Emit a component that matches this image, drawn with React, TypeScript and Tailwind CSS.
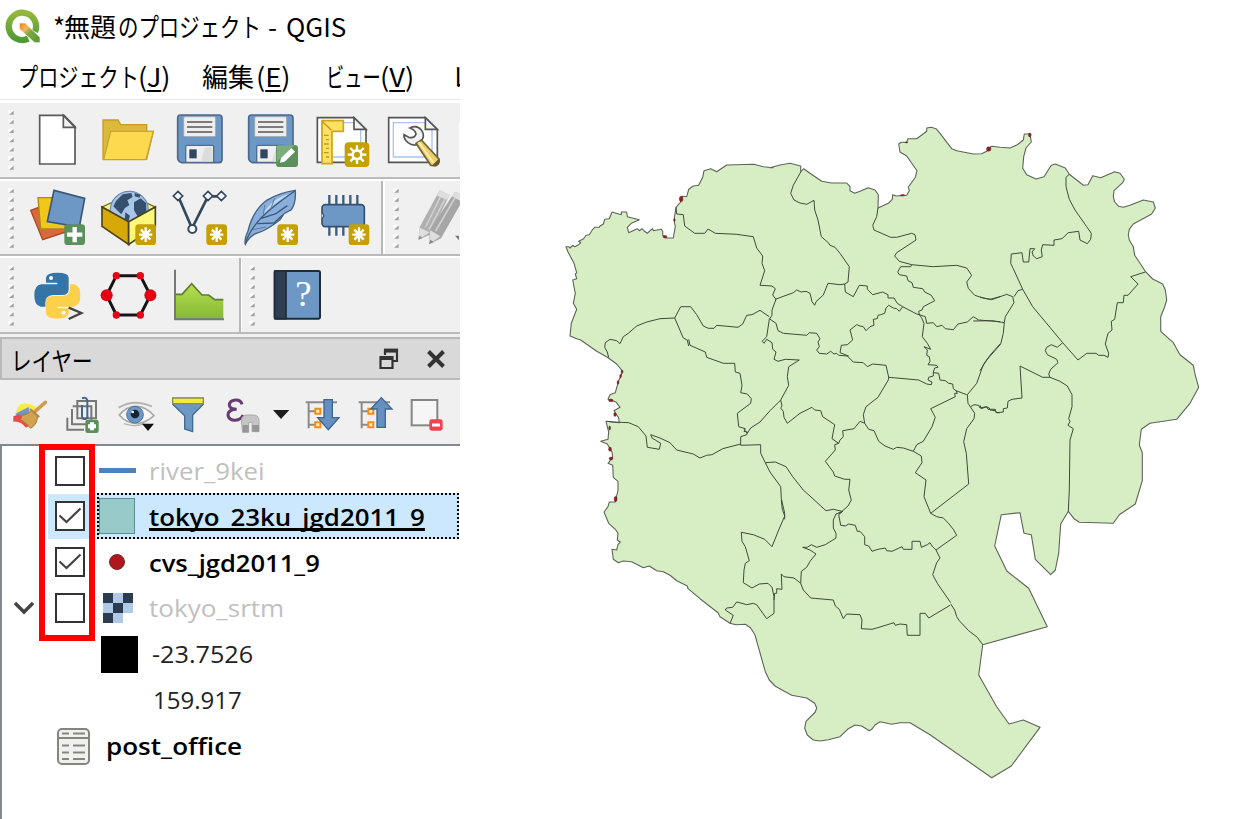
import React from "react";

type Sheet = [number, number, string];

/* Map sheets are digitised at three units per pixel from a local origin. */
const project = ([ox, oy, pts]: Sheet) =>
  pts
    .trim()
    .split(/\s+/)
    .map((p) => {
      const [x, y] = p.split(",").map(Number);
      return `${(ox + x / 3).toFixed(1)},${(oy + y / 3).toFixed(1)}`;
    })
    .join(" ");

const outline: Sheet[] = [
  [560, 120, "18,380 26,380 30,384 38,376 44,380 56,374 62,368 56,364 68,358 74,352 78,346 88,344 98,328 104,322 118,322 120,318 130,312 134,298 148,296 156,276 184,284 184,276 200,276 202,290 238,299 214,310 202,322 206,338 232,326 238,332 246,326 252,332 262,340 272,330 278,326 280,332 304,328 308,334 308,346 318,354 340,354 346,320 342,300 348,262 362,246 360,234 366,229 380,230 386,208 400,198 416,196 428,172 432,152 452,146 470,155 500,135 582,133 610,140 640,143"],
  [760, 120, "30,143 60,135 90,130 122,138 122,156 131,146 150,160 185,184 215,189 260,189 270,200 270,212 284,220 300,214 325,203 345,210 355,224 354,264 385,250 397,238 398,224 408,228 440,226 448,212 445,202 466,172 471,152 440,108 420,96 416,72 424,67 440,67 444,56 470,56 500,34 500,24 514,22 528,26 540,40 575,86 590,92 640,102 665,101 680,94 690,82"],
  [980, 120, "35,79 60,82 90,84 112,74 130,60 133,42 150,42 154,66 138,84 131,110 128,145 140,164 168,177 192,170 214,136 226,132 256,144 268,163 290,180 310,196 324,194 338,167 362,173 404,155 420,160 433,178 428,188 402,212 400,230 404,246 416,259 430,262 450,256 490,240 520,246 526,264 515,282 460,312 448,328 445,345 448,360 460,380 464,406 496,454 518,477 548,492 556,510 560,540 554,560 542,590 542,634 580,668 600,704 640,736"],
  [980, 340, "646,106 656,142 630,190 590,238 510,250 484,268 478,315 487,338 487,422 466,492 418,524 400,550 298,547 282,536 265,514 242,552 236,640 226,690 212,704 166,658 154,584 132,580 120,518 64,524 44,618 80,692"],
  [900, 530, "320,123 386,175 442,290 248,344 236,435 290,530 327,582 370,570 420,592 334,708 275,743 90,614 30,578"],
  [700, 500, "600,668 575,673 540,665 525,675 515,688 508,692 485,678 465,675 445,686 420,710 385,719 360,723 340,720 322,705 314,685 318,664 346,636 350,624 344,610 320,594 275,586 250,572 225,558 208,540 196,515 172,430 165,405 152,384 136,373 108,374 90,370 60,350 54,338 0,296"],
  [560, 340, "384,746 382,738 350,722 330,706 310,695 290,692 268,678 250,683 215,665 190,663 175,668 160,658 156,628 170,630 174,614 181,606 172,600 174,580 166,568 146,550 132,516 144,500 148,486 166,486 174,450 174,424 160,412 158,376 144,370 158,352 156,336 142,312 122,304 144,298 146,276 138,244 178,248 176,234 162,212 180,202 168,186 144,178 150,164 166,158 176,122 188,94 170,72 142,52 110,34 62,0"],
  [560, 120, "50,656 30,648 34,610 50,568 40,550 46,520 38,480 50,476 46,462 50,458 42,430 24,396"],
];

const borders: Sheet[] = [
  [560, 120, "348,262 350,282 370,284 374,318 404,340 434,340 444,327 466,340 530,343 580,350 590,384 608,408 606,430 614,452 600,496 636,498 646,506 638,525 648,538 636,570 636,586 628,598 620,650 606,664"],
  [560, 120, "146,713 142,696 134,682 136,668 150,658 170,662 180,671 190,650 205,640 230,618 260,606 300,596 344,594 362,560 392,560 410,584 430,618 445,625 462,625 470,616 534,622 548,612 560,586 576,584 600,571 628,590"],
  [560, 120, "344,594 370,654 382,660 386,678"],
  [760, 120, "122,156 100,196 92,220 102,240 120,249 140,253 162,241 164,270 174,300 184,350 205,368 210,376 225,382 240,400 268,440 264,486 254,492 240,494 204,490 190,525 168,545 164,556 156,545 150,520 138,514 124,516 110,510 100,518 46,538"],
  [760, 120, "254,492 256,516 280,530 298,496 322,498 322,508 338,524 368,516 384,524 384,534 402,534 412,550 428,560 470,582 478,584"],
  [760, 120, "354,264 350,290 338,316 342,330 392,352 410,352 455,340 465,344 468,360 410,398 404,408 418,424 455,434 520,440 590,436 620,444 635,466 620,486 625,505 644,526 670,534 690,538 720,530"],
  [760, 120, "455,434 452,440 422,440 413,456 418,464 440,468 444,482 456,488 460,502 488,506 494,516 514,526 524,542 490,560 486,570 476,574 478,584 496,590 500,610 520,608 530,620 546,616 556,626 580,629 594,612 622,606 640,590 656,600 720,605"],
  [760, 120, "428,560 418,574 410,566 400,564 386,556 378,564 374,580 362,584 354,586 352,596 340,598 342,616 330,620 318,632 310,620 300,618 290,614 270,630 278,660 262,674 244,676 240,698 266,708"],
  [760, 280, "28,116 48,130 54,152 70,160 140,166 148,158 170,160 180,176 174,186 178,200 170,210 178,220 200,222 212,214 222,222 230,220 236,226 262,228 280,246 310,248 322,260 338,252 378,256 386,292"],
  [760, 280, "386,292 385,300 354,352 318,380 310,404 314,430 326,448 342,452 356,484 375,498 400,508 410,502 430,504 460,514 484,528 486,548 466,578 498,600 492,650 512,700"],
  [760, 280, "386,292 476,300 500,312 514,314 516,306 504,300 506,292 520,288 520,276 524,264 534,262 530,256 504,254 510,244 508,230 500,226 502,210 492,200 512,208 502,190 487,170 492,130 484,112 476,102"],
  [760, 280, "520,278 536,280 540,300 556,302 566,310 578,312 580,326 588,332 620,344"],
  [760, 280, "588,332 592,340 584,340 586,350 512,386 526,412 516,440 490,484 470,494 460,514"],
  [760, 280, "720,192 690,226 670,254 650,310 622,344 624,370 644,400 642,416 620,446 611,485 619,520 626,612 512,700"],
  [760, 280, "632,380 642,374 656,376 660,384 678,380 688,384 690,390 706,392 710,398 720,398"],
  [760, 280, "6,184 12,190 20,178 36,188 38,208 48,216 42,238 54,244 76,238 118,240 86,260 82,290 86,316 62,360 30,392 0,426"],
  [760, 280, "62,360 66,378 62,384 70,394 72,412 82,430 120,400 156,382 164,390 182,392 188,410 224,434 216,476 236,490 240,480 250,470 248,452 282,446 300,424 314,430"],
  [760, 280, "236,490 224,494 226,510 196,544 220,576 224,588 254,598 270,598 266,630 274,660 264,678 246,694 236,702"],
  [760, 280, "2,494 2,520 16,548 30,576 62,620 64,656 74,700 74,718"],
  [760, 280, "16,548 46,546 78,560 98,590 130,630 198,692 220,688 246,694"],
  [560, 340, "142,244 160,246 206,248 235,260 258,288 262,322 298,328 302,310 276,294 272,284 300,294 330,308 350,330 400,342 420,354 440,346 456,344 488,326 542,312 542,290 560,284 562,276 552,274 556,266 536,260 532,220 540,214 572,190 574,176 562,162 542,158 546,136 540,100 526,96 524,70 490,70 440,52 436,36 390,16 386,-2"],
  [560, 340, "552,268 562,280 572,264 600,246"],
  [560, 340, "542,312 542,316 602,314"],
  [700, 500, "244,0 247,28 254,48 236,90 216,140 194,118 160,104 124,97 126,124 136,140 148,182 136,190 132,210 130,248 156,264 178,252 204,250 216,262 222,290 222,340 200,356 170,314 160,310 140,314 126,310 110,306 98,322 80,324 76,330 100,346 90,370"],
  [700, 500, "222,300 224,280 230,280 230,266 246,268 244,222 252,230 282,234 302,250 304,214 320,202 330,184 348,162 330,150 308,142 322,142 334,134 350,142 376,134 408,114 408,100 400,84 400,60 408,42 428,34"],
  [700, 500, "302,250 310,270 332,294 400,300 406,318 418,328 430,356 440,342 480,344 486,360 484,386 516,388 530,384 582,368 586,376 600,372 620,374 622,406 660,406 660,340 676,340 686,354 750,316"],
  [700, 500, "428,34 416,44 422,76 436,78 446,72 466,76 472,94 480,94 494,110 494,134 506,138 516,154 534,148 556,144 560,152 576,154 606,140 610,148 636,148 636,124 660,124 664,142 682,134 690,128 696,138 708,150 720,174 710,188 698,224 712,250 752,308"],
  [700, 500, "708,150 770,106 760,88 744,68 730,54 710,50 692,40"],
  [900, 530, "152,222 164,240 170,260 178,272 206,302 232,322 248,344"],
  [980, 120, "268,163 258,172 258,200 268,238 285,270 320,320 334,340 332,358 322,371 300,360 296,334 265,338 246,356 222,360 222,376 188,374 184,390 187,410 170,416 160,408 156,396 164,386 150,386 146,426 130,426 126,398 94,402 92,430 100,446 128,508 158,560 248,668 294,720 320,700 348,700 356,706 372,706 384,712 386,700 376,672 384,640 396,630 394,604 404,598 412,548 430,548 432,526 444,526 474,492 452,470 496,456"],
  [980, 120, "0,532 35,539 80,523 98,530 102,548 76,590 73,608 70,640 62,672 20,720 0,752"],
  [980, 120, "102,530 114,512 128,508"],
  [980, 120, "-20,603 35,602 73,608"],
  [980, 120, "248,668 232,682 214,674 200,682 196,692 202,704 230,718 234,728 212,748 206,762 210,772"],
  [980, 340, "210,112 240,124 262,138 276,164 276,200 266,236 270,244 264,256 280,266 270,300 268,450 265,514"],
  [980, 340, "0,196 4,206 20,200 24,208 46,208 48,218 70,216 70,206 82,204 84,184 96,178 126,174 120,78 188,112 210,112"],
];

const stores: [number, number, number, number][] = [
  [681.2, 199, 1.8, 2.8], [665, 236.7, 2, 1.3], [674.5, 220, 0.7, 1.6], [988.7, 149, 2.3, 2.2],
  [902.6, 195.3, 2.4, 0.8], [1029.8, 135, 1.4, 2], [622, 371.7, 1, 1.6], [620.6, 376, 0.9, 1.7],
  [618, 382.4, 0.9, 1.9], [610.9, 400.4, 2.2, 1.3], [615, 414.5, 1.2, 2], [609.7, 428, 0.9, 2],
  [610, 449.2, 1.4, 2.1], [611, 458.5, 1.8, 1.5], [615.6, 499, 1.5, 2.8], [906.5, 142.5, 1.3, 0.6],
];

function DistrictMap() {
  return (
    <svg width="775" height="819" viewBox="460 0 775 819" fill="none" strokeLinejoin="round">
      <polygon points={outline.map(project).join(" ")} fill="#d7eec5" stroke="#5c6458" strokeWidth="1.1" />
      {borders.map((b, i) => (
        <polyline key={i} points={project(b)} stroke="#3f4a3a" strokeWidth="1" />
      ))}
      {stores.map(([x, y, rx, ry], i) => (
        <ellipse key={i} cx={x} cy={y} rx={rx} ry={ry} fill="#9c1c20" stroke="#4a2020" strokeWidth="0.4" />
      ))}
    </svg>
  );
}

/* An icon cell; the view box is three units per pixel. */
function Cell({ x, y, w, h, children }: { x: number; y: number; w: number; h: number; children?: React.ReactNode }) {
  return (
    <svg className="block shrink-0" width={w / 3} height={h / 3} viewBox={`${x} ${y} ${w} ${h}`} fill="none">
      {children}
    </svg>
  );
}

function Handle({ first, top, h }: { first: number; top: number; h: number }) {
  return (
    <Cell x={0} y={top} w={66} h={h}>
      {[0, 1, 2, 3, 4, 5, 6].map((i) => (
        <g key={i} transform={`translate(28 ${first + i * 27.6})`}>
          <path d="M-4 -7h16v14h-16z" fill="#fafafa" />
          <path d="M13 -5v12H-1z" fill="#a0a0a0" />
        </g>
      ))}
    </Cell>
  );
}

function NewBadge({ x, y }: { x: number; y: number }) {
  return (
    <g transform={`translate(${x} ${y})`}>
      <rect width="62" height="62" rx="10" fill="#c4a000" />
      <path d="M31 9V53M11 31H51M17 16L45 46M45 16L17 46" stroke="#fff" strokeWidth="7" />
    </g>
  );
}

function Floppy({ x }: { x: number }) {
  return (
    <g transform={`translate(${x} 0)`}>
      <path d="M10 345H126q9 0 9 9V478q0 10-9 10H14q-12-4-12-14V354q0-9 8-9Z" fill="#6d97c4" stroke="#4a6a8c" strokeWidth="5" />
      <rect x="20" y="350" width="96" height="60" rx="4" fill="#eee" stroke="#9aa6b2" strokeWidth="3" />
      <path d="M30 366h76M30 381h76M30 396h76" stroke="#555" strokeWidth="5" />
      <rect x="26" y="436" width="84" height="51" rx="4" fill="#eee" stroke="#4f6d8e" strokeWidth="4" />
      <rect x="37" y="448" width="22" height="27" fill="#30475f" />
      <path d="M84 442h22v42H72z" fill="#dcdcdc" />
    </g>
  );
}

function Page({ children }: { children?: React.ReactNode }) {
  return (
    <>
      <path d="M2 353H112L148 389V487H2Z" fill="#fff" stroke="#555" strokeWidth="5" />
      <path d="M16 368H132V471H16Z" stroke="#a9c4f5" strokeWidth="4" />
      <path d="M112 353V388H148Z" fill="#f4f4f4" stroke="#555" strokeWidth="5" />
      {children}
    </>
  );
}

function FileToolbar() {
  const b = { y: 309, w: 213, h: 222 };
  return (
    <div className="flex h-[74px] overflow-hidden bg-[#f0f0f0]">
      <Handle first={337} top={309} h={222} />
      <Cell x={66} {...b}>
        <path d="M119 346H192L225 380V492H119Z" fill="#fff" stroke="#595959" strokeWidth="5" />
        <path d="M190 346V382H225Z" fill="#f2f2f2" stroke="#595959" strokeWidth="5" />
      </Cell>
      <Cell x={279} {...b}>
        <path d="M309 478V360H354L362 374H440V394H460L440 478Z" fill="#dcb93d" stroke="#c39d24" strokeWidth="4" />
        <path d="M332 394H460L438 479H311Z" fill="#fcd94f" stroke="#c9a42d" strokeWidth="4" />
      </Cell>
      <Cell x={492} {...b}><Floppy x={531} /></Cell>
      <Cell x={705} {...b}>
        <Floppy x={744} />
        <rect x="828" y="435" width="66" height="66" rx="10" fill="#5b8f5b" />
        <path d="M838 436h46l-54 50v-40q0-10 8-10Z" fill="#7fac7f" />
        <path d="M840 488l3-14 31-30 11 11-31 30z" fill="#fff" />
      </Cell>
      <Cell x={918} {...b}>
        <g transform="translate(950 0)">
          <Page>
            <path d="M16 362H80V394H46V491H16Z" fill="#fbe168" stroke="#d0a60f" strokeWidth="5" />
            <path d="M16 364L44 390M22 406h14M28 419h9M22 432h14M28 445h9M22 458h14M28 471h9" stroke="#c29a0a" strokeWidth="4" />
          </Page>
          <rect x="84" y="427" width="74" height="74" rx="12" fill="#c4a000" />
          <path d="M121 436V492M93 464H149M101 444L141 484M141 444L101 484" stroke="#fff" strokeWidth="7" />
          <circle cx="121" cy="464" r="13" fill="#c4a000" stroke="#fff" strokeWidth="8" />
        </g>
      </Cell>
      <Cell x={1131} {...b}>
        <g transform="translate(1164 0)">
          <Page />
          <path d="M66 384Q86 374 100 390Q110 404 104 416L94 432Q76 440 60 428Q46 416 48 404L62 412Q80 416 84 402Q82 390 66 384Z" fill="#f2f2f2" stroke="#555" strokeWidth="5" />
          <path d="M84 430L100 420L152 476Q158 492 142 498L128 496Z" fill="#e9ce6c" stroke="#6d6136" strokeWidth="5" />
          <path d="M92 426L136 488" stroke="#fff0a8" strokeWidth="6" />
          <path d="M132 497l22-22q6 24-22 22Z" fill="#665528" />
        </g>
      </Cell>
      <Cell x={1344} {...b}><path d="M1376 368h8v120h-8z" fill="#fafafa" /></Cell>
    </div>
  );
}

function LayerSourceToolbar() {
  const b = { y: 18, w: 213, h: 219 };
  return (
    <div className="flex h-[73px] overflow-hidden bg-[#f0f0f0]">
      <Handle first={46} top={18} h={219} />
      <Cell x={66} {...b}>
        <path d="M92 106L178 74L224 162L128 194Z" fill="#d9693a" stroke="#a9482a" strokeWidth="4" />
        <path d="M114 68H196V162H122Z" fill="#f2c71c" stroke="#a88916" strokeWidth="4" />
        <path d="M162 46L254 70L238 156L142 140Z" fill="#6d97c4" stroke="#3d5877" strokeWidth="5" />
        <rect x="193" y="148" width="62" height="62" rx="10" fill="#5b8f5b" />
        <path d="M224 156V202M201 179H247" stroke="#fff" strokeWidth="13" />
      </Cell>
      <Cell x={279} {...b}>
        <path d="M306 96L386 60L466 96L386 138Z" fill="#fff37a" stroke="#6d5b18" strokeWidth="4" />
        <circle cx="388" cy="106" r="57" fill="#a9c6e8" stroke="#6b8db3" strokeWidth="4" />
        <path d="M348 78l20-20 26-4 4 12-16 10 6 14-14 10-10 18-14-14-10-10zM402 82l20-12 16 14 2 30-16 24-10-12-12-20zM376 112l14 10-6 22-10-8zM404 54l18 6-4 8-14-4z" fill="#35506f" />
        <path d="M306 96L386 140V208L306 154Z" fill="#d6a808" stroke="#4d431b" strokeWidth="5" />
        <path d="M386 140L466 96V154L386 208Z" fill="#fcf97a" stroke="#4d431b" strokeWidth="5" />
        <NewBadge x={406} y={148} />
      </Cell>
      <Cell x={492} {...b}>
        <path d="M534 62L576 160L624 64L664 64" stroke="#35495d" strokeWidth="8" />
        <path d="M534 49l14 14-14 14-14-14zM624 49l14 14-14 14-14-14zM664 49l14 14-14 14-14-14z" fill="#f4f4f4" stroke="#35495d" strokeWidth="5" />
        <circle cx="577" cy="162" r="12" fill="#fff" stroke="#35495d" strokeWidth="6" />
        <NewBadge x={619} y={148} />
      </Cell>
      <Cell x={705} {...b}>
        <path d="M886 46Q888 86 874 104L852 116L840 134Q812 156 788 168L762 178Q744 190 736 208Q732 194 744 168Q758 108 800 76Q840 52 886 46Z" fill="#89aedb" stroke="#43637f" strokeWidth="4" />
        <path d="M784 124Q820 84 870 58Q820 64 784 124Z" fill="#c3daf3" />
        <path d="M884 48Q818 94 782 130Q746 170 736 206M784 130L828 116L862 92M772 146L822 144L848 120" stroke="#3c5a78" strokeWidth="4" />
        <path d="M758 164L798 156M790 120L794 90M812 102L824 70" stroke="#5b7da3" strokeWidth="3" />
        <NewBadge x={832} y={148} />
      </Cell>
      <Cell x={918} {...b}>
        <path d="M988 60V90M1009 60V90M1030 60V90M1051 60V90M1072 60V90M988 152V182M1009 152V182M1030 152V182M1051 152V182" stroke="#3d5c7e" strokeWidth="7" />
        <rect x="966" y="89" width="127" height="66" rx="10" fill="#6d97c4" stroke="#36516e" strokeWidth="5" />
        <path d="M965 113q12 9 0 18" fill="#f0f0f0" stroke="#36516e" strokeWidth="4" />
        <NewBadge x={1046} y={148} />
      </Cell>
      <div className="ml-[4px] h-full w-[2px] shrink-0 bg-[#b8b8b8]" />
      <div className="h-full w-[2px] shrink-0 bg-white" />
      <Handle first={46} top={18} h={219} />
      <Cell x={1224} {...b}>
        <path d="M1322 46L1352 60L1292 180L1258 194L1262 156Z" fill="#b0b0b0" />
        <path d="M1368 50L1398 64L1326 190L1290 208L1292 164Z" fill="#a6a6a6" />
        <path d="M1322 46L1352 60L1344 74L1314 62ZM1368 50L1398 64L1388 80L1358 64ZM1262 158L1292 172L1258 194ZM1294 166L1324 184L1290 208Z" fill="#dedede" />
        <path d="M1324 66L1280 156M1338 72L1290 164M1368 68L1310 168" stroke="#d0d0d0" strokeWidth="5" />
        <path d="M1262 182l-4 12 12-5zM1294 194l-4 14 14-7z" fill="#888" />
        <path d="M1368 182h12v14z" fill="#777" />
      </Cell>
    </div>
  );
}

function PluginToolbar() {
  const b = { y: 249, w: 213, h: 222 };
  return (
    <div className="flex h-[74px] overflow-hidden bg-[#f0f0f0]">
      <Handle first={279} top={249} h={222} />
      <Cell x={66} {...b}>
        <path d="M138 328V308Q140 293 172 293Q206 293 206 308V342Q206 360 186 360H158Q136 362 136 382V395H122Q103 392 103 361Q103 330 124 328H172V323H138Z" fill="#3474a7" />
        <circle cx="153" cy="309" r="6" fill="#fff" />
        <path d="M206 395V414Q204 431 172 431Q138 431 138 414V382Q138 363 158 363H186Q210 362 210 342V328H222Q241 332 241 361Q241 392 222 395H172V400H206Z" fill="#fdd04c" />
        <circle cx="191" cy="413" r="6" fill="#fff" />
        <path d="M206 398L244 414L206 432" stroke="#444" strokeWidth="7" />
      </Cell>
      <Cell x={279} {...b}>
        <path d="M349 302H421L451 361L421 420H349L320 361Z" stroke="#141414" strokeWidth="9" />
        <path d="M349 302h8M413 302h8M349 420h8M413 420h8" stroke="#f0f0f0" strokeWidth="30" />
        <circle cx="320" cy="361" r="18" fill="#e60012" />
        <circle cx="451" cy="361" r="18" fill="#e60012" />
        {[[349, 302], [421, 302], [349, 420], [421, 420]].map(([x, y]) => (
          <circle key={`${x}-${y}`} cx={x} cy={y} r="11" fill="#e60012" />
        ))}
      </Cell>
      <Cell x={492} {...b}>
        <defs>
          <linearGradient id="profile" x1="0" y1="0" x2="0" y2="1">
            <stop offset="0" stopColor="#b5e04e" />
            <stop offset="1" stopColor="#85b836" />
          </linearGradient>
        </defs>
        <path d="M526 358H546L575 326L606 360H626L644 374H670V432H526Z" fill="url(#profile)" />
        <path d="M526 358H546L575 326L606 360H626L644 374H670" stroke="#607c32" strokeWidth="5" />
        <path d="M525 284V433H672" stroke="#777" strokeWidth="6" />
      </Cell>
      <div className="ml-[4px] h-full w-[2px] shrink-0 bg-[#b8b8b8]" />
      <div className="h-full w-[1px] shrink-0 bg-white" />
      <div className="-ml-[1px] shrink-0"><Handle first={279} top={249} h={222} /></div>
      <Cell x={792} {...b}>
        <rect x="827" y="288" width="136" height="143" rx="4" fill="#6d97c4" stroke="#202c38" strokeWidth="6" />
        <path d="M827 288h34v143h-34z" fill="#2e3f51" stroke="#202c38" strokeWidth="5" />
        <text x="913" y="394" textAnchor="middle" fontFamily="Liberation Serif, serif" fontSize="110" fill="#fff">?</text>
      </Cell>
    </div>
  );
}

function LayerTools() {
  const b = { y: 135, h: 192 };
  return (
    <div className="flex h-[64px] overflow-hidden bg-[#f0f0f0] pl-[6px]">
      <Cell x={18} w={153} {...b}>
        <path d="M54 216Q66 202 84 207Q100 208 112 220L80 240L48 232Z" fill="#f9e949" />
        <path d="M46 236L86 216L90 244L62 256Z" fill="#6d97c4" />
        <path d="M40 244L58 238L94 268L78 278Q60 256 40 260Z" fill="#ec4848" />
        <path d="M66 240Q84 240 94 226L112 242Q114 266 92 280Q78 262 62 254Z" fill="#d3a250" stroke="#a77830" strokeWidth="3" />
        <path d="M102 232L136 202" stroke="#cf9c50" strokeWidth="11" strokeLinecap="round" />
        <path d="M90 222L118 246" stroke="#b48745" strokeWidth="6" />
      </Cell>
      <Cell x={171} w={159} {...b}>
        <path d="M202 248V284H252M216 222V268H274V214H218M232 198H288V250H232Z" stroke="#777" strokeWidth="6" />
        <path d="M246 210V244Q248 254 256 252Q264 250 262 240V196Q258 184 246 190" stroke="#43688f" strokeWidth="6" />
        <rect x="256" y="254" width="40" height="40" rx="7" fill="#5b8f5b" />
        <path d="M276 262V286M264 274H288" stroke="#fff" strokeWidth="12" />
      </Cell>
      <Cell x={330} w={159} {...b}>
        <path d="M356 218Q400 190 456 214" stroke="#b4b4b4" strokeWidth="6" />
        <path d="M358 240Q378 214 410 214Q440 216 462 242Q440 262 414 266Q376 264 358 240Z" fill="#f6f6f6" stroke="#aaa" strokeWidth="5" />
        <circle cx="405" cy="239" r="25" fill="#6d97c4" stroke="#50749b" strokeWidth="3" />
        <circle cx="405" cy="237" r="13" fill="#16222f" />
        <circle cx="398" cy="231" r="4" fill="#fff" />
        <path d="M372 266Q408 278 432 266" stroke="#b4b4b4" strokeWidth="4" />
        <path d="M426 266H462L444 288Z" fill="#111" />
      </Cell>
      <Cell x={489} w={153} {...b}>
        <path d="M518 190H610V208L578 240V290L554 282V242L518 208Z" fill="#6d97c4" stroke="#46698e" strokeWidth="4" />
        <path d="M518 189H610V206H518Z" fill="#f4ea3d" stroke="#8b9045" strokeWidth="4" />
      </Cell>
      <Cell x={642} w={159} {...b}>
        <path d="M726 208Q722 194 706 195Q688 197 688 211Q690 223 710 223Q684 224 684 240Q686 256 706 256Q724 254 729 240" stroke="#683b73" strokeWidth="9" />
        <path d="M724 260Q724 238 744 240H760Q778 240 777 260V290H756V262H746V292H728Z" fill="#c5c5c5" stroke="#aaa" strokeWidth="3" />
        <path d="M728 270h18v22h-18zM757 270h20v20h-20z" fill="#969696" />
      </Cell>
      <Cell x={801} w={90} {...b}><path d="M819 225H868L843 252Z" fill="#1d1d1d" /></Cell>
      {[891, 1050].map((x, i) => (
        <Cell key={x} x={0} w={i ? 156 : 159} {...b}>
          <path d="M26 202H120M35 202V280M35 229H58M35 269H58" stroke="#8a8a8a" strokeWidth="6" />
          <path d="M55 221H70V236H55ZM55 262H70V277H55Z" fill="#fff3c8" stroke="#f28c17" strokeWidth="6" />
          <path
            d={i ? "M94 188L126 222H106V277H81V222H62Z" : "M81 194H106V248H126L94 284L62 248H81Z"}
            fill="#6591c2" stroke="#3f658f" strokeWidth="4"
          />
        </Cell>
      ))}
      <Cell x={1206} w={174} {...b}>
        <rect x="1235" y="195" width="77" height="76" fill="#f6f6f6" stroke="#868686" strokeWidth="6" />
        <rect x="1288" y="253" width="40" height="34" rx="7" fill="#ef4350" />
        <path d="M1296 270H1320" stroke="#fff" strokeWidth="9" />
      </Cell>
    </div>
  );
}

function Check({ on }: { on?: boolean }) {
  return (
    <svg className="ml-[7px] block shrink-0" width="30" height="30" viewBox="0 0 30 30" fill="none">
      <rect x="1" y="1" width="28" height="28" fill="#fff" stroke="#333" strokeWidth="2" />
      {on && <path d="M4.5 14.5L11.5 21L25.5 7.5" stroke="#444" strokeWidth="2.2" />}
    </svg>
  );
}

const raster = ["#2b3b50", "#b0c9e6", "#2b3b50", "#b0c9e6", "#2b3b50", "#b0c9e6", "#2b3b50", "#b0c9e6", "#fff"];

function LayerTree() {
  return (
    <div className="relative flex-1 border-l-2 border-t-2 border-[#828790] bg-white pt-[2px] font-['Open_Sans','Noto_Sans',sans-serif] text-[24px] leading-[46px] text-black">
      <div className="flex h-[45px] items-center pl-[46px]">
        <Check />
        <div className="ml-[14px] h-[5px] w-[37px] bg-[#4f81bd]" />
        <span className="ml-[13px] inline-block origin-left scale-x-[1.075] whitespace-nowrap text-[#c0c0c0]">river_9kei</span>
      </div>
      <div className="flex h-[46px] items-center pl-[46px]">
        <div className="flex h-[45px] w-[44px] items-center bg-[#cce8ff]"><Check on /></div>
        <div className="ml-[5px] flex h-[46px] w-[362px] items-center border-2 border-dotted border-black bg-[#cce8ff]">
          <div className="h-[36px] w-[36px] border border-[#5d8d8d] bg-[#98cac9]" />
          <span className="ml-[14px] inline-block origin-left scale-x-[1.078] whitespace-nowrap pt-[2px] font-semibold underline decoration-[3px] underline-offset-2 [text-decoration-skip-ink:none]">tokyo_23ku_jgd2011_9</span>
        </div>
      </div>
      <div className="flex h-[46px] items-center pl-[46px]">
        <Check on />
        <div className="ml-[24px] h-[16px] w-[16px] rounded-full border border-[#6d2a2a] bg-[#b0171d]" />
        <span className="ml-[24px] inline-block origin-left scale-x-[1.065] whitespace-nowrap pt-[1px] font-semibold">cvs_jgd2011_9</span>
      </div>
      <div className="flex h-[46px] items-center pl-[12px]">
        <svg className="block" width="20" height="14" viewBox="0 0 20 14" fill="none">
          <path d="M1 2L10 11L19 2" stroke="#444" strokeWidth="3.4" />
        </svg>
        <div className="ml-[14px]"><Check /></div>
        <div className="ml-[18px] grid h-[30px] w-[30px] grid-cols-3">
          {raster.map((c, i) => <div key={i} style={{ background: c }} />)}
        </div>
        <span className="ml-[16px] inline-block origin-left scale-x-[1.085] whitespace-nowrap text-[#c0c0c0]">tokyo_srtm</span>
      </div>
      <div className="flex h-[46px] items-center pl-[99px]">
        <div className="h-[37px] w-[37px] bg-black" />
        <span className="ml-[14px] inline-block origin-left scale-x-[1.05] whitespace-nowrap text-[#222]">-23.7526</span>
      </div>
      <div className="flex h-[46px] items-center pl-[151px]">
        <span className="whitespace-nowrap text-[#222]">159.917</span>
      </div>
      <div className="flex h-[46px] items-center pl-[55px]">
        <svg className="block" width="33" height="37" viewBox="0 0 33 37" fill="none">
          <rect x="1" y="1" width="31" height="35" rx="4" fill="#f0f0ee" stroke="#858580" strokeWidth="2" />
          <path d="M1 10H32" stroke="#858580" strokeWidth="2" />
          <path d="M5 5.5H12M16 5.5H28M5 17.5H12M16 17.5H28M5 24.5H12M16 24.5H28M5 31H12M16 31H28" stroke="#858580" strokeWidth="2" />
        </svg>
        <span className="ml-[16px] inline-block origin-left scale-x-[1.085] whitespace-nowrap font-semibold">post_office</span>
      </div>
      <div className="absolute -top-[2px] left-[37px] h-[197px] w-[56px] border-[6px] border-[#ff0000]" />
    </div>
  );
}

function Mnemonic({ letter }: { letter: string }) {
  return (
    <span className="inline-block origin-left scale-x-[1.05] whitespace-nowrap">
      (<span className="underline decoration-2 underline-offset-[3px]">{letter}</span>)
    </span>
  );
}

export default function App() {
  return (
    <div className="flex h-[819px] w-[1235px] overflow-hidden bg-white">
      <div className="flex w-[460px] shrink-0 flex-col overflow-hidden font-['Noto_Sans_CJK_JP',sans-serif] text-black">
        <div className="flex h-[50px] items-center pl-[4px] pt-[2px]">
          <svg className="block shrink-0" width="38" height="36" viewBox="12 20 114 108" fill="none">
            <defs>
              <linearGradient id="ring" x1="0" y1="0" x2="0" y2="1">
                <stop offset="0" stopColor="#93b83b" />
                <stop offset="1" stopColor="#4f9a36" />
              </linearGradient>
              <linearGradient id="tail" x1="0" y1="0" x2="1" y2="1">
                <stop offset="0" stopColor="#ee7913" />
                <stop offset=".3" stopColor="#f3b961" />
                <stop offset=".5" stopColor="#78a843" />
                <stop offset="1" stopColor="#589632" />
              </linearGradient>
            </defs>
            <path d="M85 112A41 41 0 1 1 105 91" stroke="url(#ring)" strokeWidth="19" />
            <path d="M58 65H76L120 108V124H104L58 83Z" fill="url(#tail)" stroke="#fff" strokeWidth="2" />
          </svg>
          <div className="ml-[11px] flex whitespace-nowrap text-[26px] leading-[36px]">
            <span className="w-[11px]">*</span>
            <span className="w-[54px]">無題</span>
            <span className="w-[142px]"><span className="inline-block origin-left scale-x-[.785]">のプロジェクト</span></span>
            <span className="ml-[8px] w-[18px]">-</span>
            <span>QGIS</span>
          </div>
        </div>
        <div className="flex h-[49px] whitespace-nowrap text-[26px] leading-[52px]">
          <div className="flex w-[184px] shrink-0 pl-[18px]">
            <span className="w-[120px]"><span className="inline-block origin-left scale-x-[.775]">プロジェクト</span></span>
            <Mnemonic letter="J" />
          </div>
          <div className="flex w-[142px] shrink-0 pl-[18px]">
            <span className="w-[54px]">編集</span>
            <Mnemonic letter="E" />
          </div>
          <div className="flex w-[125px] shrink-0">
            <span className="w-[54px]"><span className="inline-block origin-left scale-x-[.7]">ビュー</span></span>
            <Mnemonic letter="V" />
          </div>
          <span className="shrink-0">レ</span>
        </div>
        <div className="h-[1px] bg-[#e8e8e8]" />
        <div className="h-[3px] bg-white" />
        <FileToolbar />
        <div className="h-[2px] bg-[#bababa]" />
        <div className="h-[2px] bg-white" />
        <LayerSourceToolbar />
        <div className="h-[2px] bg-[#bababa]" />
        <div className="h-[2px] bg-white" />
        <PluginToolbar />
        <div className="h-[2px] bg-[#bababa]" />
        <div className="h-[3px] bg-[#f0f0f0]" />
        <div className="flex h-[43px] items-center border-y-2 border-l-2 border-[#b9b9b9] bg-[#d9d9d9] pl-[9px]">
          <span className="w-[368px] whitespace-nowrap pt-[2px] text-[26px] leading-[37px]">
            <span className="inline-block origin-left scale-x-[.79]">レイヤー</span>
          </span>
          <svg className="block" width="20" height="22" viewBox="0 0 20 22" fill="none">
            <path d="M6 7V2H18V13H14" stroke="#333" strokeWidth="2.2" />
            <path d="M5 2.6H19" stroke="#333" strokeWidth="4" />
            <path d="M1.5 9H13.5V20H1.5Z" stroke="#333" strokeWidth="2.2" />
            <path d="M1 10H14" stroke="#333" strokeWidth="4" />
          </svg>
          <svg className="ml-[28px] block" width="18" height="18" viewBox="0 0 18 18" fill="none">
            <path d="M1.5 1.5L16.5 16.5M16.5 1.5L1.5 16.5" stroke="#333" strokeWidth="4" />
          </svg>
        </div>
        <LayerTools />
        <LayerTree />
      </div>
      <DistrictMap />
    </div>
  );
}
